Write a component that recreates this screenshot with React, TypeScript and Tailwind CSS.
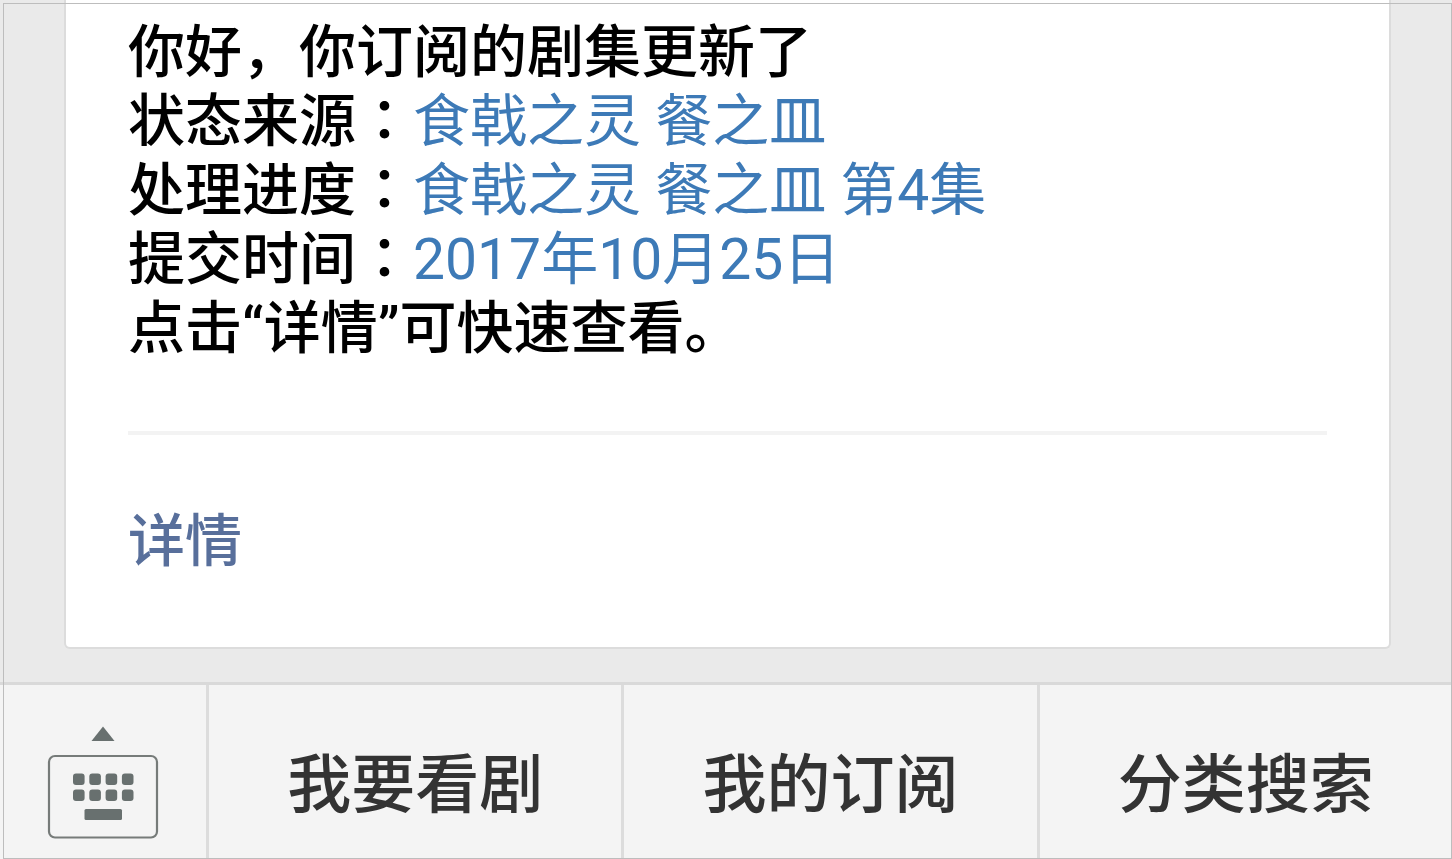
const rows = [
  { label: "状态来源", value: "食戟之灵 餐之皿" },
  { label: "处理进度", value: "食戟之灵 餐之皿 第4集" },
  { label: "提交时间", value: "2017年10月25日" },
];

const menus = ["我要看剧", "我的订阅", "分类搜索"];

function KeyboardIcon() {
  return (
    <svg width="112" height="113" viewBox="0 0 112 113" fill="none" aria-hidden="true">
      <path d="M56 0.500L67.500 15H44.500Z" fill="#68706f" />
      <rect x="2" y="30" width="108" height="81.500" rx="6" stroke="#767b79" strokeWidth="2.200" />
      <g fill="#68706f">
        {[47, 63].map((y) =>
          [26, 42.300, 58.600, 74.900].map((x) => (
            <rect key={`${x}-${y}`} x={x} y={y + 0.500} width="11.600" height="11.600" rx="3" />
          )),
        )}
        <rect x="37.500" y="83" width="37.500" height="11" rx="1.500" />
      </g>
    </svg>
  );
}

export default function App() {
  return (
    <div className="relative flex min-h-screen flex-col bg-[#eaeaea] font-['Roboto','Noto_Sans_CJK_SC',sans-serif]">
      <main className="flex flex-1 flex-col pr-[61px] pb-[33px] pl-16">
        <article className="flex-1 rounded-b-md border-2 border-t-0 border-[#dcdcdc] bg-white px-[62px] pt-[18px]">
          <div className="text-[57px] leading-[69px] font-medium text-black">
            <p>你好，你订阅的剧集更新了</p>
            {rows.map((row) => (
              <p key={row.label}>
                {row.label}
                <span className="font-['Roboto','Noto_Sans_CJK_JP',sans-serif]" lang="ja">：</span>
                <span className="font-normal text-[#3d7ab7]">{row.value}</span>
              </p>
            ))}
            <p>点击“详情”可快速查看。</p>
          </div>
          <hr className="mt-[68px] border-t-4 border-[#f3f3f3]" />
          <a href="#details" className="mt-[72px] inline-block text-[57px] leading-[69px] font-medium text-[#586f9b]">
            详情
          </a>
        </article>
      </main>
      <nav className="flex h-[177px] border-t-3 border-[#d9d9d9] bg-[#f4f4f4]">
        <button type="button" aria-label="键盘" className="flex w-[206px] shrink-0 justify-center pt-[41px]">
          <KeyboardIcon />
        </button>
        {menus.map((menu) => (
          <button
            key={menu}
            type="button"
            className="flex-1 border-l-3 border-[#dcdcdc] pt-7 text-[64px] leading-[80px] font-medium text-[#333333]"
          >
            {menu}
          </button>
        ))}
      </nav>
      <div className="pointer-events-none absolute top-[3px] right-0 bottom-0 left-[3px] border border-[#bdbdbd]" />
    </div>
  );
}
